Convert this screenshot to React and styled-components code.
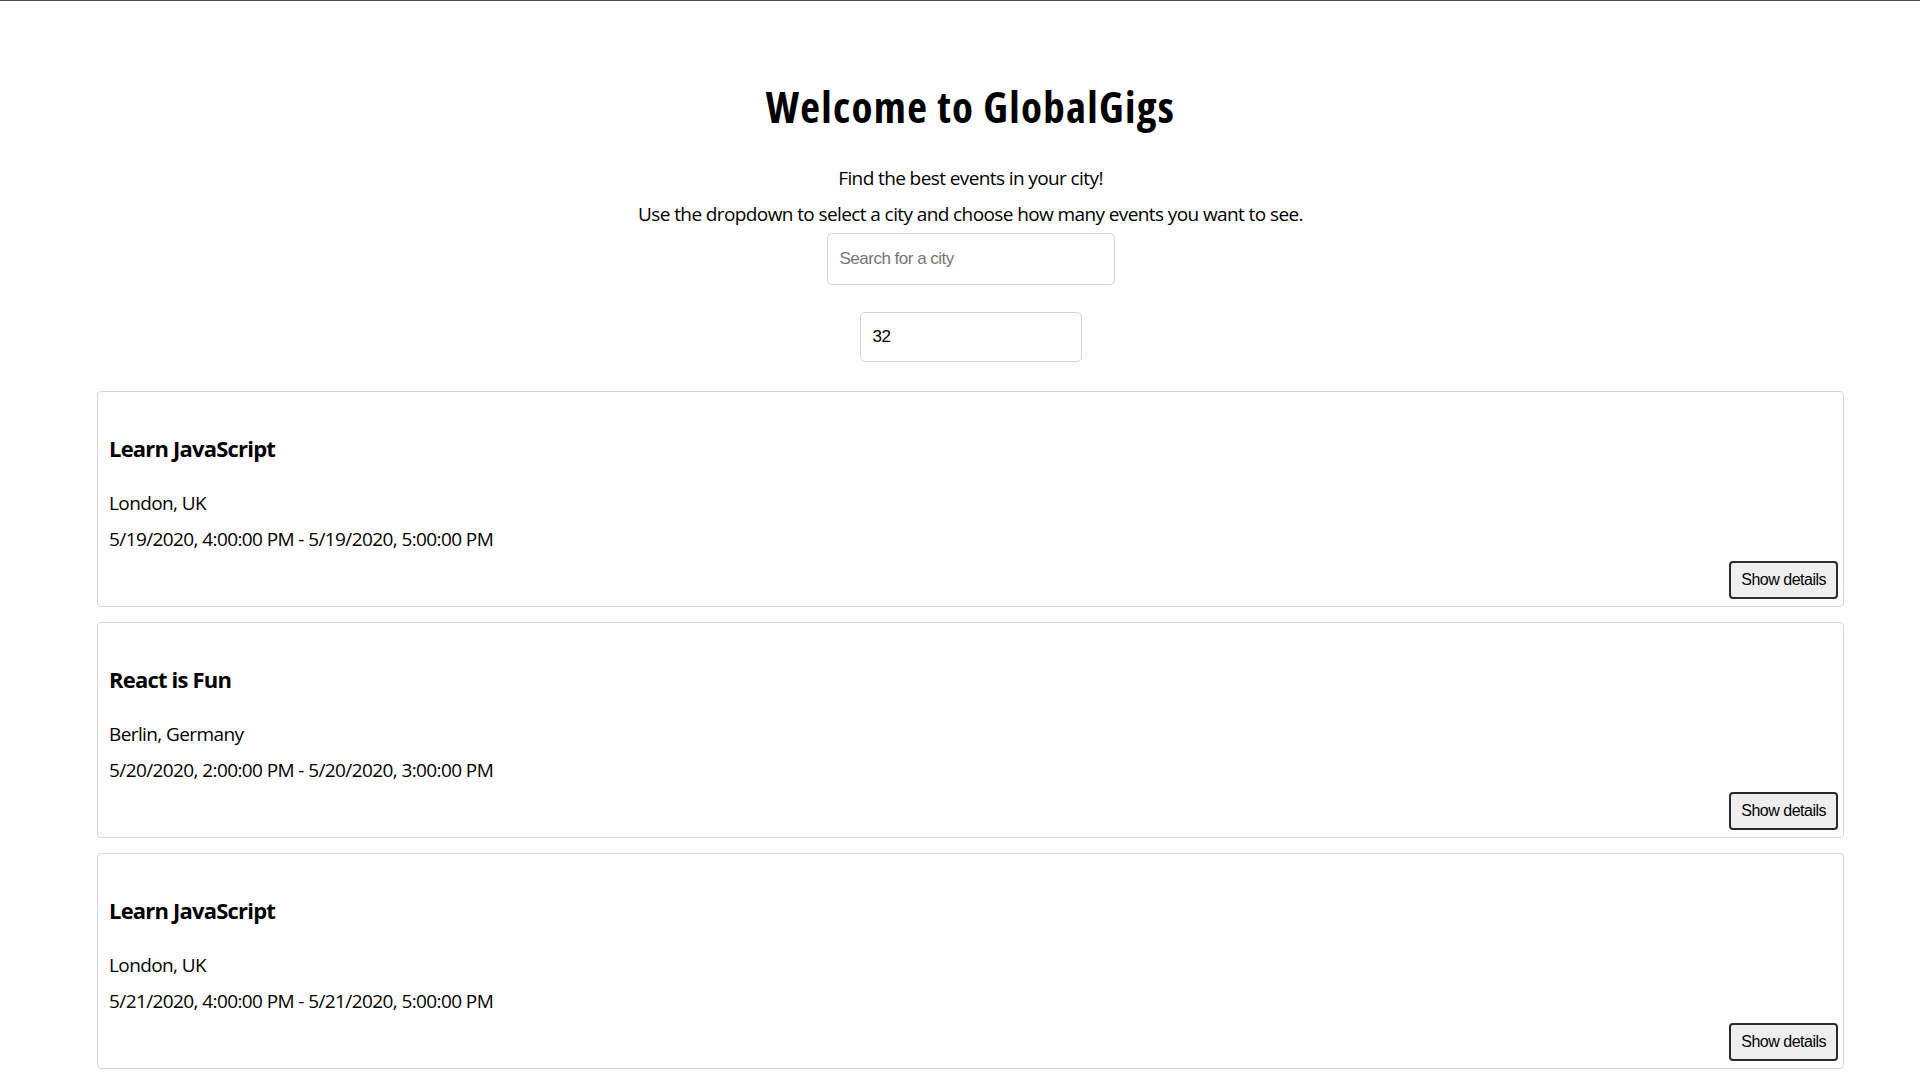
import React from "react";
import styled, { createGlobalStyle } from "styled-components";

const GlobalStyle = createGlobalStyle`
  html, body {
    margin: 0;
    padding: 0;
    background: #ffffff;
  }
  body {
    border-top: 1px solid #505050;
    font-family: "Open Sans", "Noto Sans", sans-serif;
    color: #000000;
  }
`;

const events = [
  {
    id: 1,
    summary: "Learn JavaScript",
    location: "London, UK",
    start: "5/19/2020, 4:00:00 PM",
    end: "5/19/2020, 5:00:00 PM"
  },
  {
    id: 2,
    summary: "React is Fun",
    location: "Berlin, Germany",
    start: "5/20/2020, 2:00:00 PM",
    end: "5/20/2020, 3:00:00 PM"
  },
  {
    id: 3,
    summary: "Learn JavaScript",
    location: "London, UK",
    start: "5/21/2020, 4:00:00 PM",
    end: "5/21/2020, 5:00:00 PM"
  }
];

const AppWrapper = styled.div`
  padding: 0 76px 0 97px;
  display: flex;
  flex-direction: column;
  align-items: center;
`;

const Heading = styled.h1`
  margin: 81px 0 0;
  font-size: 43px;
  line-height: 50px;
  font-weight: 700;
  font-stretch: condensed;
  letter-spacing: 1.3px;
`;

const Intro = styled.p`
  margin: ${props => (props.first ? "28px 0 0" : "0")};
  font-size: 19px;
  line-height: 36px;
  letter-spacing: -0.6px;
`;

const Field = styled.input`
  box-sizing: border-box;
  width: ${props => props.width}px;
  height: ${props => props.height}px;
  margin-top: ${props => props.top}px;
  padding: 0 12px;
  border: 1px solid #d6d6d6;
  border-radius: 5px;
  font-family: "Liberation Sans", Arial, sans-serif;
  font-size: 17px;
  letter-spacing: -0.5px;
  color: #000000;
  outline: none;
  background: #ffffff;

  &::placeholder {
    color: #757575;
  }
`;

const EventList = styled.ul`
  list-style: none;
  margin: 29px 0 0;
  padding: 0;
  width: 100%;
  display: flex;
  flex-direction: column;
  gap: 15px;
`;

const Card = styled.li`
  box-sizing: border-box;
  height: 216px;
  display: flex;
  flex-direction: column;
  padding: 41px 5px 7px 11px;
  border: 1px solid #d8d8d8;
  border-radius: 4px;
  text-align: left;
`;

const Title = styled.h2`
  margin: 0;
  font-size: 22px;
  line-height: 30px;
  font-weight: 700;
  letter-spacing: -0.8px;
`;

const Info = styled.p`
  margin: ${props => (props.first ? "22px 0 0" : "0")};
  font-size: 19px;
  line-height: 36px;
  letter-spacing: -0.6px;
`;

const DetailsButton = styled.button`
  align-self: flex-end;
  margin-top: 4px;
  height: 38px;
  padding: 0 10px;
  border: 2px solid #2b2b2b;
  border-radius: 4px;
  background: #efefef;
  font-family: "Liberation Sans", Arial, sans-serif;
  font-size: 16px;
  letter-spacing: -0.5px;
  color: #000000;
  cursor: pointer;
`;

const Event = ({ event }) => (
  <Card>
    <Title>{event.summary}</Title>
    <Info first>{event.location}</Info>
    <Info>
      {event.start} - {event.end}
    </Info>
    <DetailsButton>Show details</DetailsButton>
  </Card>
);

export default function App() {
  return (
    <>
      <GlobalStyle />
      <AppWrapper>
        <Heading>Welcome to GlobalGigs</Heading>
        <Intro first>Find the best events in your city!</Intro>
        <Intro>
          Use the dropdown to select a city and choose how many events you want
          to see.
        </Intro>
        <Field
          type="text"
          placeholder="Search for a city"
          width={288}
          height={52}
          top={1}
        />
        <Field type="number" defaultValue={32} width={222} height={50} top={27} />
        <EventList>
          {events.map(e => (
            <Event key={e.id} event={e} />
          ))}
        </EventList>
      </AppWrapper>
    </>
  );
}
